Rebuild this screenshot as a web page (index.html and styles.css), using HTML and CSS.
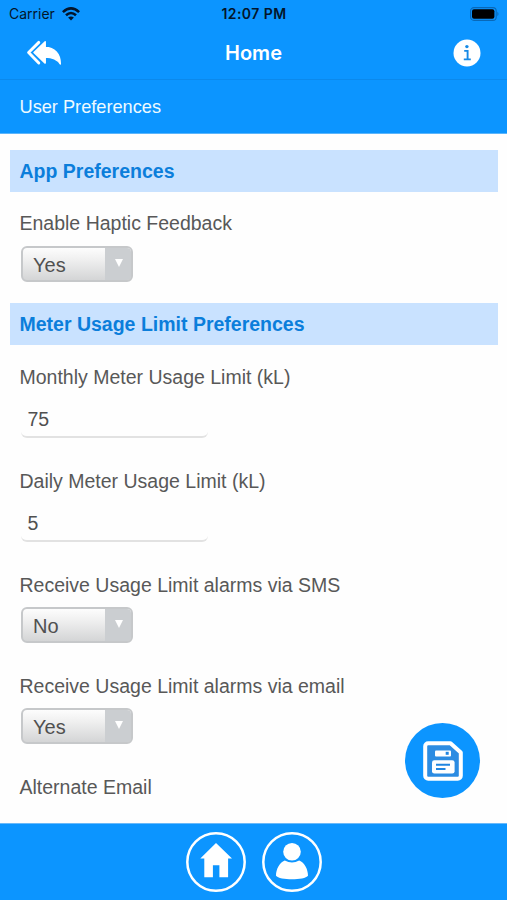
FILE: index.html
```html
<!DOCTYPE html>
<html lang="en">
<head>
<meta charset="utf-8">
<title>User Preferences</title>
<link rel="stylesheet" href="styles.css">
</head>
<body>
<div class="app">
  <div class="status">
    <div class="carrier"><span>Carrier</span>
      <svg width="18" height="14" viewBox="0 0 18 14" fill="none" stroke="#03152b" stroke-width="2.6"><path d="M.9 5.1Q9-2.3 17.1 5.1M4 8.3Q9 3.7 14 8.3"/><path d="M9 13.6 6.1 10.6Q9 8.4 11.9 10.6Z" fill="#03152b" stroke="none"/></svg>
    </div>
    <div class="time">12:07 PM</div>
    <svg class="battery" width="30" height="14" viewBox="0 0 30 14"><rect x=".6" y=".6" width="25.6" height="12.8" rx="3.4" fill="none" stroke="#0868b8" stroke-width="1.1"/><rect x="2" y="2.2" width="22.4" height="9.6" rx="2" fill="#000"/><path d="M27.4 4.8q2.2 2.2 0 4.4z" fill="#0868b8"/></svg>
  </div>
  <header class="nav">
    <svg width="36" height="26" viewBox="0 0 36 26" fill="#fff" stroke="#fff" stroke-linejoin="round" stroke-linecap="round"><path d="M12.8 2.4 2.6 12.5l10.2 10.4" fill="none" stroke-width="2.9"/><path d="M19.2 1.8v5.7C28.5 7.5 34.3 13.8 34.3 24c-3-5.2-7.4-7.1-15.1-7.1v6.2L8 12.5z" stroke-width="1.5"/></svg>
    <h1>Home</h1>
    <svg class="info" width="28" height="28" viewBox="0 0 28 28"><circle cx="14" cy="14" r="13.5" fill="#fff"/><circle cx="13.9" cy="7.6" r="1.7" fill="#178ae6"/><path d="M11.2 11.9h3.4v8.3M10.8 20.4h7" fill="none" stroke="#178ae6" stroke-width="1.9"/></svg>
  </header>
  <div class="subbar">User Preferences</div>
  <main>
    <h2>App Preferences</h2>
    <div class="field"><label>Enable Haptic Feedback</label><div class="select"><span>Yes</span><i></i></div></div>
    <h2 class="second">Meter Usage Limit Preferences</h2>
    <div class="field"><label>Monthly Meter Usage Limit (kL)</label><div class="input">75</div></div>
    <div class="field"><label>Daily Meter Usage Limit (kL)</label><div class="input">5</div></div>
    <div class="field"><label>Receive Usage Limit alarms via SMS</label><div class="select"><span>No</span><i></i></div></div>
    <div class="field"><label>Receive Usage Limit alarms via email</label><div class="select"><span>Yes</span><i></i></div></div>
    <div class="field"><label>Alternate Email</label></div>
  </main>
  <div class="save">
    <svg width="40" height="40" viewBox="0 0 40 40"><path d="M5.2 2.2h22.3L37.8 11.5v23.3a3 3 0 0 1-3 3H5.2a3 3 0 0 1-3-3V5.2a3 3 0 0 1 3-3z" fill="#2c8ce2" stroke="#fff" stroke-width="4" stroke-linejoin="round"/><rect x="12" y="9.4" width="16" height="6" rx="1" fill="#fff"/><rect x="22.7" y="10.8" width="3" height="3" fill="#2085e0"/><rect x="9" y="19.2" width="22.6" height="13.4" rx="2.4" fill="#fff"/><path d="M13 23.7h14M13 27.9h9.5" stroke="#2085e0" stroke-width="2"/></svg>
  </div>
  <footer>
    <svg width="60" height="60" viewBox="0 0 60 60" fill="#fff"><circle cx="30" cy="30" r="28.7" fill="none" stroke="#fff" stroke-width="2.5"/><path d="M30 11 14.3 26.6H18.3V45.3h8.6V33.3h6.5v12h8.7V26.6H46z"/></svg>
    <svg width="60" height="60" viewBox="0 0 60 60" fill="#fff"><circle cx="30" cy="30" r="28.7" fill="none" stroke="#fff" stroke-width="2.5"/><circle cx="30" cy="19.8" r="8.8"/><path d="M22.8 28.4q7.2 4.2 14.4 0C42.5 30.5 46 37 46 43.7 42.5 48.5 17.5 48.5 14 43.7 14 37 17.5 30.5 22.8 28.4z"/></svg>
  </footer>
</div>
</body>
</html>
```
FILE: styles.css
```css
* { box-sizing: border-box; }
body { margin: 0; font-family: "Liberation Sans", Arial, sans-serif; background: #fefefe; }
svg { display: block; flex: none; }
.app { position: relative; width: 507px; height: 900px; display: flex; flex-direction: column; overflow: hidden; }
.status { height: 27px; flex: none; background: #0c95ff; display: grid; grid-template-columns: 1fr auto 1fr; align-items: center; padding: 0 7px 0 9px; color: #03152b; font-family: Inter, sans-serif; font-size: 14px; line-height: 27px; }
.carrier { display: flex; align-items: center; gap: 7px; }
.time { font-weight: 600; letter-spacing: .45px; margin-left: -1px; }
.battery { justify-self: end; }
.nav { height: 53px; flex: none; background: #0c95ff; border-bottom: 1px solid #0b89ec; display: grid; grid-template-columns: 1fr auto 1fr; align-items: center; padding: 0 26px; }
h1 { margin: 0; font: 600 20px/52px Inter, sans-serif; color: #fff; }
.info { justify-self: end; }
.subbar { height: 54px; flex: none; background: #0c95ff; border-bottom: 1px solid #5bb5fb; padding-left: 19.5px; color: #eefaff; font-size: 18.2px; line-height: 54px; }
main { flex: 1; min-height: 0; padding: 16px 9px 0 10px; overflow: hidden; }
h2 { margin: 0; height: 42px; background: #c9e2ff; color: #0b7edb; font-size: 19.5px; line-height: 43px; padding-left: 9.5px; white-space: nowrap; }
.second { margin-top: 21px; height: 42px; line-height: 43px; }
.second + .field { padding-top: 20px; }
.field { padding: 19px 0 0 9.5px; color: #585858; }
label { display: block; font-size: 19.5px; line-height: 24px; white-space: nowrap; }
.select { display: flex; justify-content: space-between; width: 112px; height: 36px; margin: 11px 0 10px 1.5px; border: 2px solid #c6c8ca; border-radius: 6px; background: linear-gradient(#fdfdfd, #f0f0f0 35%, #d4d5d6); overflow: hidden; font-size: 20px; line-height: 34px; color: #505050; }
.second ~ .field .select { margin: 10px 0 12px 1.5px; }
.select span { padding-left: 10px; }
.select i { width: 26px; background: #cbced1; }
.select i::before { content: ""; display: block; width: 0; margin: 11px 0 0 9.5px; border: solid transparent; border-width: 8px 4.5px 0; border-top-color: #fff; }
.input { width: 187px; height: 36px; margin: 13px 0 12px 1.5px; padding-left: 6.5px; border-bottom: 2px solid #e2e2e2; border-radius: 6px; font-size: 19.5px; line-height: 34px; color: #505050; }
.save { position: absolute; left: 405px; top: 723px; width: 75px; height: 75px; border-radius: 50%; background: #0c95ff; display: flex; align-items: center; justify-content: center; }
footer { height: 77px; flex: none; background: #0c95ff; border-top: 1px solid #69b9fa; display: flex; justify-content: center; align-items: center; gap: 16px; }
```
